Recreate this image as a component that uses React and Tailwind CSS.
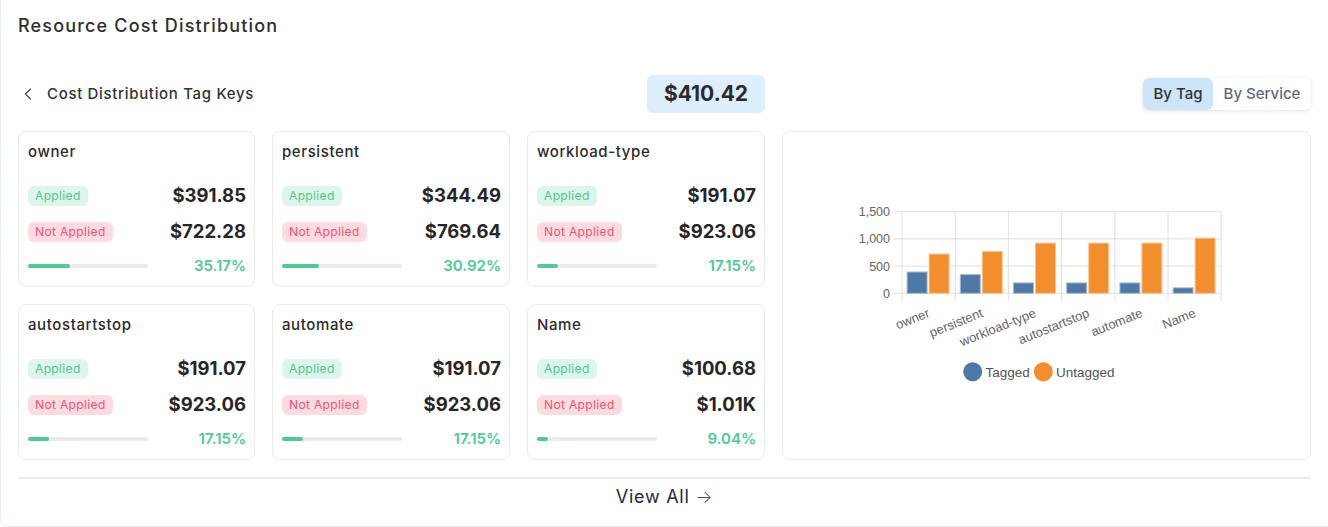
import React from 'react'
import { ChevronLeft } from 'lucide-react'

const TAGS = [
  { name: 'owner', applied: '$391.85', notApplied: '$722.28', pct: 35.17, tagged: 391.85, untagged: 722.28 },
  { name: 'persistent', applied: '$344.49', notApplied: '$769.64', pct: 30.92, tagged: 344.49, untagged: 769.64 },
  { name: 'workload-type', applied: '$191.07', notApplied: '$923.06', pct: 17.15, tagged: 191.07, untagged: 923.06 },
  { name: 'autostartstop', applied: '$191.07', notApplied: '$923.06', pct: 17.15, tagged: 191.07, untagged: 923.06 },
  { name: 'automate', applied: '$191.07', notApplied: '$923.06', pct: 17.15, tagged: 191.07, untagged: 923.06 },
  { name: 'Name', applied: '$100.68', notApplied: '$1.01K', pct: 9.04, tagged: 100.68, untagged: 1013.5 },
]

function TagCard({ t }) {
  return (
    <div className="h-[156px] rounded-lg border border-[#ebebeb] bg-white pl-[9px] pr-[8px] pt-[10px]">
      <div className="h-5 text-[15px] leading-5 font-medium tracking-[0.04em] text-[#2a2a2a]">{t.name}</div>
      <div className="mt-[24px] flex h-5 items-center justify-between">
        <span className="rounded-md bg-[#ddf5ea] px-[7px] text-[12px] leading-5 tracking-[0.03em] text-[#4fc88e]">Applied</span>
        <span className="text-[18.5px] font-bold text-[#262626]">{t.applied}</span>
      </div>
      <div className="mt-[16px] flex h-5 items-center justify-between">
        <span className="rounded-md bg-[#fddbe1] px-[7px] text-[12px] leading-5 tracking-[0.03em] text-[#ef5470]">Not Applied</span>
        <span className="text-[18.5px] font-bold text-[#262626]">{t.notApplied}</span>
      </div>
      <div className="mt-[14px] flex h-5 items-center justify-between">
        <div className="h-[4px] w-[120px] rounded-full bg-[#e8ebee]">
          <div className="h-full rounded-full bg-[#4ccb92]" style={{ width: `${t.pct}%` }} />
        </div>
        <span className="text-[15px] font-semibold text-[#4ccb92]">{t.pct.toFixed(2)}%</span>
      </div>
    </div>
  )
}

// chart coords are relative to the chart card's top-left (783,132)
function Chart() {
  const ox = 783, oy = 132
  const x0 = 902 - ox, step = 53.2, y0 = 293.3 - oy, scale = 81.6 / 1500
  const ticks = [0, 500, 1000, 1500]
  return (
    <svg width="527" height="327" viewBox="0 0 527 327" className="block" style={{ fontFamily: '"Liberation Sans", Arial, sans-serif' }}>
      {ticks.map(v => (
        <g key={v}>
          <line x1={x0 - 8} x2={x0 + step * 6} y1={y0 - v * scale} y2={y0 - v * scale} stroke="#e0e0e0" strokeWidth="1" />
          <text x={x0 - 12} y={y0 - v * scale + 4.5} textAnchor="end" fontSize="12.5" fill="#666">{v.toLocaleString('en-US')}</text>
        </g>
      ))}
      {Array.from({ length: 7 }).map((_, i) => (
        <line key={i} x1={x0 + step * i} x2={x0 + step * i} y1={y0 - 1500 * scale} y2={y0 + 8} stroke="#e0e0e0" strokeWidth="1" />
      ))}
      {TAGS.map((t, i) => {
        const cx = x0 + step * i + step / 2
        const ht = t.tagged * scale, hu = t.untagged * scale
        return (
          <g key={t.name}>
            <rect x={cx - 21.5} y={y0 - ht} width="20" height={ht} fill="#4e79a7" stroke="#a7bcd3" strokeWidth="1" />
            <rect x={cx + 0.5} y={y0 - hu} width="20" height={hu} fill="#f28e2b" stroke="#f8c695" strokeWidth="1" />
            <text x={cx + 2} y={y0 + 23} textAnchor="end" fontSize="13" fill="#666" transform={`rotate(-22 ${cx + 2} ${y0 + 23})`}>{t.name}</text>
          </g>
        )
      })}
      <circle cx={972.7 - ox} cy={371.7 - oy} r="9.5" fill="#4e79a7" />
      <text x={985.5 - ox} y={376.5 - oy} fontSize="13.5" fill="#555">Tagged</text>
      <circle cx={1043.3 - ox} cy={371.7 - oy} r="9.5" fill="#f28e2b" />
      <text x={1056 - ox} y={376.5 - oy} fontSize="13.5" fill="#555">Untagged</text>
    </svg>
  )
}

export default function App() {
  return (
    <div className="min-h-screen bg-white" style={{ fontFamily: 'Inter, "Noto Sans", sans-serif' }}>
      <div className="h-[527px] rounded-bl-lg border-l border-b border-[#e4eefa] bg-white pl-[17px] pr-[17px]">
        <div className="pt-[14px] text-[18px] leading-6 font-medium tracking-[0.065em] text-[#2e2e2e]">Resource Cost Distribution</div>

        <div className="mt-[37px] grid grid-cols-[237px_238px_238px_1fr] gap-x-[17px]">
          <div className="col-span-3 flex h-[38px] items-center justify-between">
            <div className="flex items-center">
              <ChevronLeft size={20} strokeWidth={1.3} className="text-[#444]" />
              <span className="ml-[9px] text-[15px] font-medium tracking-[0.045em] text-[#333]">Cost Distribution Tag Keys</span>
            </div>
            <div className="flex h-[38px] w-[118px] items-center justify-center rounded-md bg-[#ddeefd] text-[21px] font-bold text-[#2b2b2b]">$410.42</div>
          </div>
          <div className="flex items-center justify-end">
            <div className="flex h-8 w-[168px] overflow-hidden rounded-md bg-white shadow-[0_1px_4px_rgba(0,0,0,0.12)]">
              <div className="flex w-[70px] items-center justify-center rounded-md bg-[#cce5fb] text-[15px] font-medium text-[#333]">By Tag</div>
              <div className="flex flex-1 items-center justify-center text-[15px] font-medium text-[#5e6a7a]">By Service</div>
            </div>
          </div>
        </div>

        <div className="mt-[18px] grid grid-cols-[237px_238px_238px_1fr] grid-rows-[156px_156px] gap-x-[17px] gap-y-[17px]">
          {TAGS.slice(0, 3).map(t => <TagCard key={t.name} t={t} />)}
          <div className="row-span-2 overflow-hidden rounded-lg border border-[#ebebeb] bg-white">
            <Chart />
          </div>
          {TAGS.slice(3).map(t => <TagCard key={t.name} t={t} />)}
        </div>

        <div className="mt-[17px] h-[2px] bg-[#ececec]" />
        <div className="flex justify-center pt-[6px]">
          <span className="text-[18px] leading-6 tracking-[0.04em] text-[#262b36]">View All <span className="font-extralight">→</span></span>
        </div>
      </div>
    </div>
  )
}
